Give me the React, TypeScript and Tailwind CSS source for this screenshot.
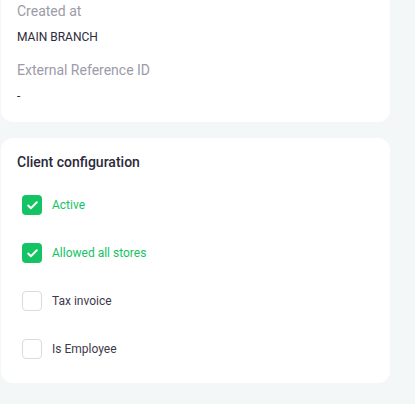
import { Check } from "lucide-react";

type Option = { label: string; checked: boolean };

const options: Option[] = [
  { label: "Active", checked: true },
  { label: "Allowed all stores", checked: true },
  { label: "Tax invoice", checked: false },
  { label: "Is Employee", checked: false },
];

function Field({ label, value }: { label: string; value: string }) {
  return (
    <div className="flex flex-col gap-2">
      <span className="text-[14px] leading-5 text-[#9c9ba8]">{label}</span>
      <span className="text-[12px] leading-4 text-[#2c2a3c]">{value}</span>
    </div>
  );
}

export default function App() {
  return (
    <div
      className="min-h-[404px] w-[415px] bg-[#f4f7f8] pl-[1px]"
      style={{ fontFamily: "Roboto, 'Noto Sans', sans-serif" }}
    >
      {/* Details card (top cut off) */}
      <div className="w-[389px] rounded-b-xl bg-white pl-4 pt-[1px] pb-[18px]">
        <div className="flex flex-col gap-[15px]">
          <Field label="Created at" value="MAIN BRANCH" />
          <Field label="External Reference ID" value="-" />
        </div>
      </div>

      {/* Client configuration */}
      <div className="mt-4 w-[389px] rounded-xl bg-white pl-4 pt-[14px] pb-6">
        <h3 className="text-[14px] font-medium leading-5 text-[#2b2a3a]">
          Client configuration
        </h3>
        <div className="mt-[23px] flex flex-col gap-7 pl-[5px]">
          {options.map((o) => (
            <label key={o.label} className="flex h-5 items-center gap-[10px]">
              {o.checked ? (
                <span className="flex h-5 w-5 items-center justify-center rounded-[4px] bg-[#14c364]">
                  <Check className="h-[13px] w-[13px] text-white" strokeWidth={3.5} />
                </span>
              ) : (
                <span className="h-5 w-5 rounded-[4px] border border-[#d9dbe0] bg-white" />
              )}
              <span
                className={
                  o.checked
                    ? "text-[12px] leading-4 text-[#14c364]"
                    : "text-[12px] leading-4 text-[#3d3b4e]"
                }
              >
                {o.label}
              </span>
            </label>
          ))}
        </div>
      </div>
    </div>
  );
}
